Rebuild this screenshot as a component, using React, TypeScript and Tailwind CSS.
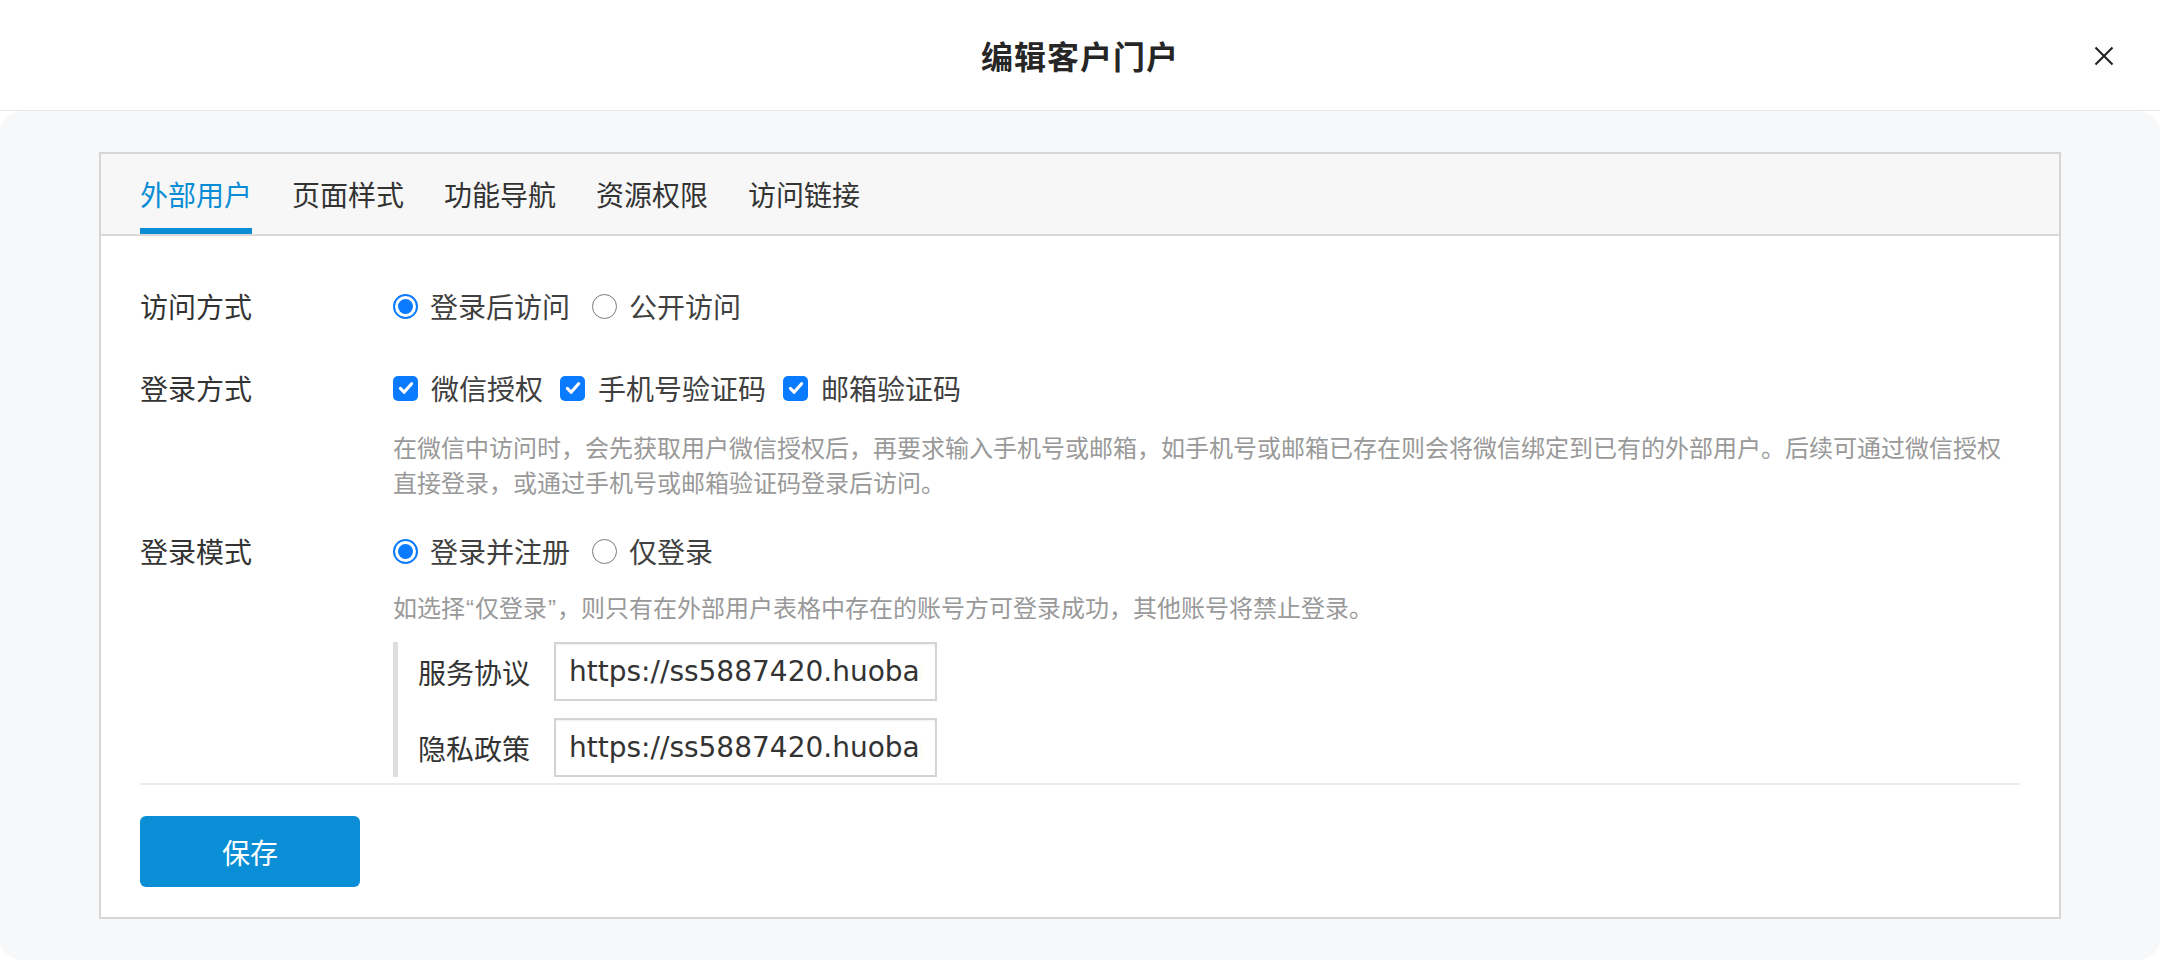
import React from 'react';

const tabs = ['外部用户', '页面样式', '功能导航', '资源权限', '访问链接'];

function Radio({ checked, label }: { checked?: boolean; label: string }) {
  return (
    <label className="flex items-center gap-[12px] cursor-pointer">
      {checked ? (
        <span className="w-[25px] h-[25px] shrink-0 rounded-full border-2 border-[#0a7aff] flex items-center justify-center">
          <span className="w-[15px] h-[15px] rounded-full bg-[#0a7aff]"></span>
        </span>
      ) : (
        <span className="w-[25px] h-[25px] shrink-0 rounded-full border-[1.5px] border-[#7a7a7a] bg-white"></span>
      )}
      <span className="text-[28px] leading-[40px] text-[#404040]">{label}</span>
    </label>
  );
}

function Checkbox({ label }: { label: string }) {
  return (
    <label className="flex items-center gap-[13px] cursor-pointer">
      <span className="w-[25px] h-[25px] shrink-0 rounded-[5px] bg-[#0a7aff] flex items-center justify-center">
        <svg className="w-[18px] h-[18px]" viewBox="0 0 16 16" fill="none">
          <path d="M3 8.4l3.3 3.4L13 4.2" stroke="white" strokeWidth="2.8" strokeLinecap="round" strokeLinejoin="round" />
        </svg>
      </span>
      <span className="text-[28px] leading-[40px] text-[#404040]">{label}</span>
    </label>
  );
}

export default function App() {
  return (
    <div className="w-[2160px] h-[960px] bg-white flex flex-col font-['Noto_Sans_CJK_SC','Noto_Sans',sans-serif]">
      {/* Header */}
      <header className="h-[111px] shrink-0 border-b border-[#e6e6e6] relative flex items-center justify-center">
        <h1 className="text-[32px] font-bold text-[#262626] tracking-[1px]">编辑客户门户</h1>
        <button className="absolute right-[46px] top-[46px] w-[20px] h-[20px]">
          <svg className="w-[20px] h-[20px]" viewBox="0 0 20 20" fill="none">
            <path d="M1.5 1.5l17 17M18.5 1.5l-17 17" stroke="#1f1f1f" strokeWidth="2" />
          </svg>
        </button>
      </header>

      {/* Body */}
      <main className="flex-1 bg-[#f7f8fa] rounded-[22px] px-[99px] pt-[41px]">
        <div className="bg-white border-2 border-[#d6d6d6]">
          {/* Tabs */}
          <div className="h-[82px] bg-[#f7f7f7] border-b-2 border-[#d9d9d9] flex gap-[40px] px-[39px]">
            {tabs.map((t, i) => (
              <div key={t} className="relative h-[80px] flex items-center cursor-pointer">
                <span className={i === 0 ? 'text-[28px] text-[#0a8dd5]' : 'text-[28px] text-[#333]'}>{t}</span>
                {i === 0 && <span className="absolute left-0 right-0 bottom-0 h-[6px] bg-[#0a8dd5]"></span>}
              </div>
            ))}
          </div>

          {/* Form */}
          <div className="px-[39px] pt-[50px] pb-[30px]">
            <div className="flex">
              <div className="w-[253px] text-[28px] leading-[40px] text-[#333]">访问方式</div>
              <div className="flex items-center gap-[22px] h-[40px]">
                <Radio checked label="登录后访问" />
                <Radio label="公开访问" />
              </div>
            </div>

            <div className="flex mt-[42px]">
              <div className="w-[253px] text-[28px] leading-[40px] text-[#333]">登录方式</div>
              <div className="flex items-center gap-[17px] h-[40px]">
                <Checkbox label="微信授权" />
                <Checkbox label="手机号验证码" />
                <Checkbox label="邮箱验证码" />
              </div>
            </div>
            <p className="ml-[253px] mt-[21px] text-[24px] leading-[35px] text-[#999] whitespace-nowrap">
              在微信中访问时，会先获取用户微信授权后，再要求输入手机号或邮箱，如手机号或邮箱已存在则会将微信绑定到已有的外部用户。后续可通过微信授权
              <br />
              直接登录，或通过手机号或邮箱验证码登录后访问。
            </p>

            <div className="flex mt-[32px]">
              <div className="w-[253px] text-[28px] leading-[40px] text-[#333]">登录模式</div>
              <div className="flex items-center gap-[22px] h-[40px]">
                <Radio checked label="登录并注册" />
                <Radio label="仅登录" />
              </div>
            </div>
            <p className="ml-[253px] mt-[18px] h-[35px] overflow-visible text-[24px] leading-[35px] text-[#999] whitespace-nowrap">
              如选择<span className="font-['Liberation_Sans',sans-serif] mx-[1px]">“</span>仅登录<span className="font-['Liberation_Sans',sans-serif] mx-[1px]">”</span>，则只有在外部用户表格中存在的账号方可登录成功，其他账号将禁止登录。
            </p>

            <div className="ml-[253px] mt-[18px] border-l-[5px] border-[#dedede] pl-[20px] flex flex-col gap-[17px]">
              <div className="flex items-center gap-[24px]">
                <span className="text-[28px] text-[#333]">服务协议</span>
                <input
                  readOnly
                  value="https://ss5887420.huobanyun.cn/agreement"
                  className="w-[383px] h-[59px] border-2 border-[#d4d4d4] px-[13px] text-[28px] text-[#333] font-['DejaVu_Sans',sans-serif] outline-none shadow-[inset_0_1px_2px_rgba(0,0,0,0.06)]"
                />
              </div>
              <div className="flex items-center gap-[24px]">
                <span className="text-[28px] text-[#333]">隐私政策</span>
                <input
                  readOnly
                  value="https://ss5887420.huobanyun.cn/privacy"
                  className="w-[383px] h-[59px] border-2 border-[#d4d4d4] px-[13px] text-[28px] text-[#333] font-['DejaVu_Sans',sans-serif] outline-none shadow-[inset_0_1px_2px_rgba(0,0,0,0.06)]"
                />
              </div>
            </div>

            <div className="mt-[6px] h-[2px] bg-[#ebebeb]"></div>

            <button className="mt-[31px] w-[220px] h-[71px] rounded-[6px] bg-[#0a8fd6] text-white text-[28px]">
              保存
            </button>
          </div>
        </div>
      </main>
    </div>
  );
}
